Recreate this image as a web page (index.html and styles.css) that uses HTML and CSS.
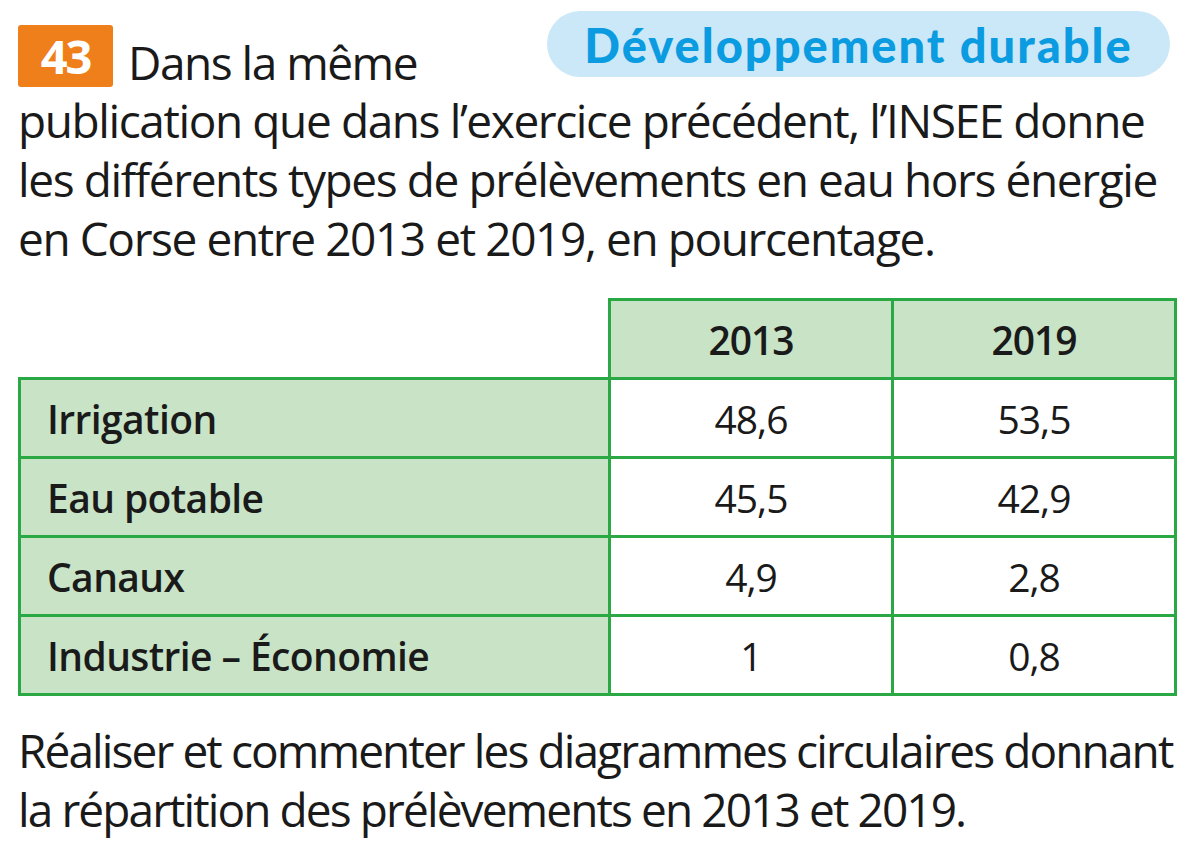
FILE: index.html
```html
<!DOCTYPE html>
<html lang="fr">
<head>
<meta charset="utf-8">
<title>Exercice 43</title>
<link rel="stylesheet" href="styles.css">
</head>
<body>
<main class="page">
  <div class="intro">
    <div class="lead">
      <span class="badge">43</span>
      <span class="lead-text">Dans la même</span>
    </div>
    <span class="pill">Développement durable</span>
  </div>
  <p class="para">publication que dans l’exercice précédent, l’INSEE donne<br>les différents types de prélèvements en eau hors énergie<br>en Corse entre 2013 et 2019, en pourcentage.</p>
  <table class="data">
    <thead>
      <tr>
        <th class="empty"></th>
        <th>2013</th>
        <th>2019</th>
      </tr>
    </thead>
    <tbody>
      <tr><th class="label">Irrigation</th><td>48,6</td><td>53,5</td></tr>
      <tr><th class="label">Eau potable</th><td>45,5</td><td>42,9</td></tr>
      <tr><th class="label">Canaux</th><td>4,9</td><td>2,8</td></tr>
      <tr><th class="label">Industrie – Économie</th><td>1</td><td>0,8</td></tr>
    </tbody>
  </table>
  <p class="para closing">Réaliser et commenter les diagrammes circulaires donnant<br>la répartition des prélèvements en 2013 et 2019.</p>
</main>
</body>
</html>
```
FILE: styles.css
```css
html, body {
  margin: 0;
  padding: 0;
  background: #ffffff;
}

.page {
  width: 1200px;
  height: 864px;
  box-sizing: border-box;
  padding: 0 0 0 18px;
  font-family: "Open Sans", "Noto Sans", sans-serif;
  color: #1a1a1a;
  overflow: hidden;
}

.intro {
  display: flex;
  justify-content: space-between;
  align-items: flex-start;
  padding-right: 30px;
}

.lead {
  display: flex;
  align-items: flex-start;
  gap: 15px;
}

.badge {
  margin-top: 25px;
  width: 95px;
  height: 62px;
  border-radius: 3px;
  background: #ef7f1a;
  color: #ffffff;
  font-weight: 700;
  font-size: 47px;
  line-height: 62px;
  text-align: center;
  letter-spacing: -2px;
}

.lead-text {
  margin-top: 33px;
  font-size: 46px;
  line-height: 58px;
  letter-spacing: -1.5px;
}

.pill {
  margin-top: 11px;
  width: 623px;
  height: 66px;
  box-sizing: border-box;
  padding-top: 3px;
  border-radius: 33px;
  background: #cbe8f8;
  color: #0b9be0;
  font-family: "Lato", "Open Sans", sans-serif;
  font-weight: 900;
  font-size: 47px;
  line-height: 63px;
  text-align: center;
  letter-spacing: 2px;
}

.para {
  margin: 0;
  font-size: 46px;
  line-height: 59px;
  letter-spacing: -1.4px;
  white-space: nowrap;
}

.data {
  margin-top: 30px;
  border-collapse: collapse;
  width: 1159px;
  font-size: 39px;
}

.data th,
.data td {
  border: 3px solid #2aa844;
  height: 76px;
  padding: 0;
  text-align: center;
  font-weight: 400;
  letter-spacing: -1px;
}

.data thead th {
  background: #c8e3c6;
  font-weight: 600;
  width: 280px;
}

.data thead th.empty {
  background: transparent;
  border: none;
  width: auto;
}

.data th.label {
  background: #c8e3c6;
  font-weight: 600;
  text-align: left;
  padding-left: 26px;
  letter-spacing: -0.6px;
}

.closing {
  margin-top: 25px;
  letter-spacing: -1.9px;
}
```
